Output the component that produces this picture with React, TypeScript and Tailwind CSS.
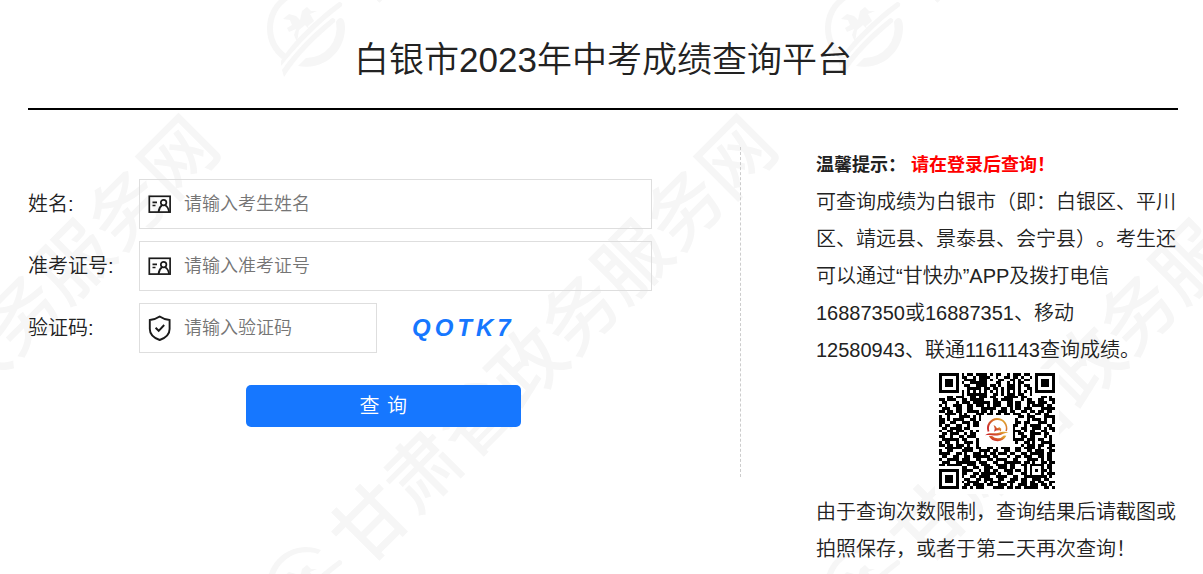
import { useState } from "react";
import type { ReactNode } from "react";

const QR_ROWS = [
  "#######.#.##.####.#.##..#.###.##..#######",
  "#.....#.##..#.####..#..##.##.#..#.#.....#",
  "#.###.#..####.###.#..##..##.#.##..#.###.#",
  "#.###.#.#..######...##..#.#.##....#.###.#",
  "#.###.#..##..####.##.#..###.#.##..#.###.#",
  "#.....#...#####.##.##.#.###.#..##.#.....#",
  "#######.#.#.#.#.#.#.#.#.#.#.#.#.#.#######",
  "........#.#######..##.#.###.##..#........",
  "...##.###..##.###.##...#####.##.....##.#.",
  "##.###..##.#####...##.####...#.##..##..##",
  ".##...#.###.######.###..##.##..###.###..#",
  "#.#..###..##.###.#.###..##.##..#.####.##.",
  ".###..##..##...#####..##.#.##.###...#####",
  "##.##.##..####.##.#..###.##..##.##.##.##.",
  "..####.#.#...###.##.##.##.###..#..##.##..",
  "#..#...####.#.#.............##.###...####",
  "##.#.####..##.#............#...#.###.#..#",
  "##..##..###.##.............##.##...###..#",
  "#.##..##..#.##............##..#.####..##.",
  ".##.####.##...............#..##..###.#.##",
  "#..##.###..#.#............###.#.##..##..#",
  ".##.###..#.##.............#.##..####.##..",
  "##..#..##.###.............#..##.##...#.#.",
  ".######.##...#............####.###.##..#.",
  "#.##..#..###.#.............#..##.#..####.",
  "##.##.###.#..#...............#.###.##..##",
  "..######.###.##..##.#.###..##.####.#..##.",
  "#..##...####..####.##..##..##..##.###..##",
  "####..##.#..###.#.##.###.##..##.#####.##.",
  ".##..##..##.######.##...#..##.###..##.##.",
  "#..####.###..##..##.####..##...####.#.##.",
  ".###..#######.###..##..######.##.#..##.##",
  "##.#####..###..###..####.##..##.#####.##.",
  "........##..##..###..###.##...#.#...#.##.",
  "#######.####..#.##.##..###.##.#.#.#.##.#.",
  "#.....#.##..##.#####.#..##...##.#...#.###",
  "#.###.#.#..##.####..####..##..########.#.",
  "#.###.#..##..##.###..##..###.##..###.##..",
  "#.###.#.#.####..#.####..###..##.##.##..##",
  "#.....#..##.####.##..###.#..###.###.##.#.",
  "#######.##.#.###...####.##.##.#####..##.#",
];

const qrPath = QR_ROWS.map((row, y) =>
  [...row].map((c, x) => (c === "#" ? `M${x} ${y}h1v1h-1z` : "")).join(""),
).join("");

const MARKS = [
  [306, 28],
  [864, 28],
  [-252, 586],
  [306, 586],
  [864, 586],
];

function Watermark() {
  return (
    <svg
      aria-hidden="true"
      className="absolute inset-0 -z-10 h-full w-full fill-[#f6f6f6]"
    >
      {MARKS.map(([x, y]) => (
        <g key={`${x}-${y}`} transform={`translate(${x} ${y})`}>
          <path d="M-24 31A39 39 0 0 1 -39 0A39 39 0 0 1 15 -36L12 -32A34 34 0 0 0 -33 0A33 33 0 0 0 -20 26Z" />
          <path d="M-8 38A39 39 0 0 0 39 0Q39 -6 37 -9Q33 -12 30 -6A30 30 0 0 1 0 30Z" />
          <path d="M-25 33C-17 18 8 -8 33 -26Q37 -26 36 -22C14 -5 -2 10 -25 38Z" />
          <path d="M-24 42C-10 22 8 4 26 -10Q30 -10 29 -6C12 8 -8 27 -22 49Z" />
          <path d="M-23 -9L-17 -14L-10 -12L-6 -8L-4 -17L1 -21L5 -17L11 -17L4 -14L8 -7L2 -2L3 1L-1 -3L-7 2L-9 14L-12 7L-10 1L-17 4L-19 0L-14 -3L-16 -8Z" />
          <text
            transform="rotate(-45)"
            x="53"
            y="28"
            className="font-['Noto_Sans_CJK_SC',sans-serif] text-[74px] font-medium"
          >
            甘肃省政务服务网
          </text>
        </g>
      ))}
    </svg>
  );
}

function IdCardIcon() {
  return (
    <svg
      viewBox="0 0 24 24"
      className="h-6 w-6 shrink-0 fill-none stroke-[#1a1a1a]"
      strokeWidth="1.7"
    >
      <rect x="1.3" y="4.3" width="20.8" height="15.8" />
      <path d="M4.5 10.3H9M4.5 13.5H7.5" />
      <circle cx="15.6" cy="10.6" r="2.8" />
      <path d="M10.6 20C10.8 16.6 12.2 14.4 14 13.2M17.2 13.2C19.3 14.4 20.6 16.6 21 20" />
    </svg>
  );
}

function ShieldIcon() {
  return (
    <svg
      viewBox="0 0 24 24"
      className="h-6 w-6 shrink-0 overflow-visible fill-none stroke-[#1a1a1a]"
      strokeWidth="1.9"
    >
      <path d="M11.7 .6C14.5 2.6 18 3.7 21.6 4V13C21.6 18.2 17.5 22 11.7 24C5.9 22 1.8 18.2 1.8 13V4C5.4 3.7 8.9 2.6 11.7 .6Z" />
      <path d="M7.6 11.8L10.7 14.8L16.2 9" />
    </svg>
  );
}

function QrCode() {
  return (
    <svg
      role="img"
      viewBox="0 0 41 41"
      className="mx-auto h-[125px] w-[124px] bg-white p-1 pb-[5px]"
    >
      <defs>
        <linearGradient id="brand" x1="1" y1="0" x2="0" y2="1">
          <stop offset="0.2" stopColor="#e0a030" />
          <stop offset="0.8" stopColor="#cc2a2a" />
        </linearGradient>
      </defs>
      <path d={qrPath} shapeRendering="crispEdges" />
      <rect x="15.5" y="15.5" width="10.4" height="10.4" rx="1" fill="#fff" />
      <g fill="url(#brand)">
        <path d="M17.2 20.8A3.6 3.6 0 1 1 24 20.6L23.5 20.5A3 3 0 1 0 17.8 20.6Z" />
        <path d="M17.6 22.3A3.5 3.5 0 0 0 23.8 22.2L22.9 22.1A2.8 2.8 0 0 1 18.8 22.3Z" />
        <path d="M16.3 22C17.6 20.8 19.4 21.6 20.8 21.2C22.3 20.7 23.4 20.7 24.6 21C22.4 21.3 21.4 22.3 19.6 22.1C18.4 21.9 17.4 21.8 16.3 22Z" />
        <path d="M19.3 18.4L20 18.8L20.5 19.5L21.4 19.2L22 19.7L21.9 20.7L21.4 20.2L20.2 20.3L19.5 20.8L19.7 19.6Z" />
      </g>
    </svg>
  );
}

type FieldProps = {
  id: string;
  label: string;
  placeholder: string;
  icon: ReactNode;
  children?: ReactNode;
};

function Field({ id, label, placeholder, icon, children }: FieldProps) {
  return (
    <div className="flex items-center">
      <label htmlFor={id} className="w-[111px] shrink-0 text-xl">
        {label}
      </label>
      <div
        className={`flex h-[50px] items-center gap-3 border border-[#dedede] pl-2 ${
          children ? "w-[238px]" : "flex-1"
        }`}
      >
        {icon}
        <input
          id={id}
          type="text"
          placeholder={placeholder}
          className="h-full w-full min-w-0 bg-transparent text-lg outline-none placeholder:text-[#757575]"
        />
      </div>
      {children}
    </div>
  );
}

export default function App() {
  const [code] = useState("QOTK7");

  return (
    <div
      lang="zh-CN"
      className="relative isolate min-h-screen overflow-hidden bg-white pr-[25px] pl-7 font-['Liberation_Sans','Noto_Sans_CJK_SC',sans-serif] font-[350] text-[#222] [text-spacing-trim:space-all]"
    >
      <Watermark />
      <header className="border-b-2 border-black pt-[35px] pb-[23px]">
        <h1 className="text-center text-[35px] leading-[50px]">
          白银市2023年中考成绩查询平台
        </h1>
      </header>

      <main className="mt-[37px] flex items-start">
        <div className="min-h-[330px] w-[62%] border-r border-dashed border-[#ccc] pt-8 pr-[88px]">
          <form
            className="flex flex-col gap-3"
            onSubmit={(e) => e.preventDefault()}
          >
            <Field
              id="name"
              label="姓名:"
              placeholder="请输入考生姓名"
              icon={<IdCardIcon />}
            />
            <Field
              id="ticket"
              label="准考证号:"
              placeholder="请输入准考证号"
              icon={<IdCardIcon />}
            />
            <Field
              id="code"
              label="验证码:"
              placeholder="请输入验证码"
              icon={<ShieldIcon />}
            >
              <button
                type="button"
                className="ml-[35px] text-2xl font-bold tracking-[4px] text-[#1677ff] italic"
              >
                {code}
              </button>
            </Field>
            <button
              type="submit"
              className="mt-5 ml-[35%] h-[42px] w-[44%] rounded-[5px] bg-[#1677ff] text-xl tracking-wider text-white"
            >
              查 询
            </button>
          </form>
        </div>

        <aside className="flex-1 pl-[75px] text-xl leading-[37px]">
          <h2 className="text-lg leading-[37px] font-bold">
            温馨提示： <span className="text-[#f00]">请在登录后查询！</span>
          </h2>
          <p>
            可查询成绩为白银市（即：白银区、平川区、靖远县、景泰县、会宁县）。考生还可以通过“甘快办”APP及拨打电信16887350或16887351、移动12580943、联通1161143查询成绩。
          </p>
          <QrCode />
          <p>
            由于查询次数限制，查询结果后请截图或拍照保存，或者于第二天再次查询！
          </p>
        </aside>
      </main>
    </div>
  );
}
